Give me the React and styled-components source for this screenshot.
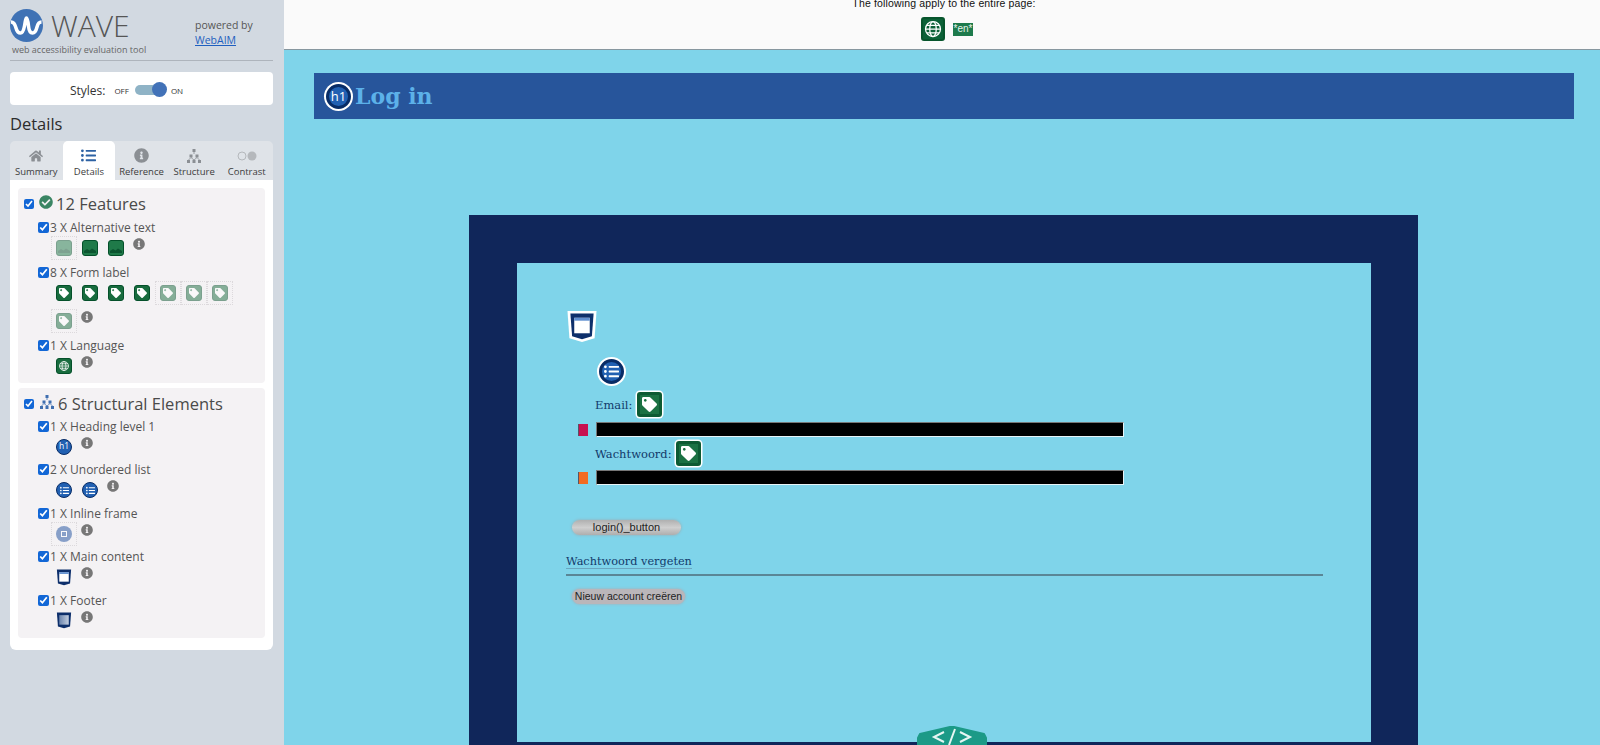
import React from 'react';
import styled, { createGlobalStyle, css } from 'styled-components';
import { FaHome, FaInfoCircle, FaListUl, FaTag, FaCheckCircle } from 'react-icons/fa';

const GlobalStyle = createGlobalStyle`
  html, body {
    margin: 0;
    height: 100%;
    overflow: hidden;
  }
  body {
    font-family: 'Open Sans', 'Liberation Sans', sans-serif;
    background: #7fd4ea;
  }
`;

const Page = styled.div`
  display: flex;
  width: 1600px;
  height: 745px;
  overflow: hidden;
`;

/* ---------- sidebar ---------- */

const Sidebar = styled.aside`
  flex: 0 0 284px;
  box-sizing: border-box;
  padding: 9px 11px 0 10px;
  background: #d2d9e1;
  color: #444;
`;

const Brand = styled.header`
  display: flex;
  height: 51px;
  border-bottom: 1px solid #aeb4bc;
`;

const BrandLeft = styled.div`
  width: 185px;
`;

const BrandTop = styled.div`
  display: flex;
  align-items: center;
  gap: 8px;
  height: 33px;
`;

const WaveWord = styled.span`
  font-size: 30px;
  font-weight: 300;
  line-height: 33px;
  color: #555;
`;

const Tagline = styled.div`
  margin: 1px 0 0 2px;
  font-size: 9px;
  line-height: 14px;
  color: #666;
`;

const Powered = styled.div`
  padding-top: 9px;
  font-size: 10.5px;
  line-height: 15px;
  color: #555;

  a {
    display: block;
    color: #1f5fbf;
  }
`;

const StylesPanel = styled.div`
  display: flex;
  align-items: center;
  justify-content: center;
  height: 33px;
  box-sizing: border-box;
  margin-top: 11px;
  padding: 3px 30px 0 0;
  background: #fff;
  border-radius: 4px;
  font-size: 12px;
  color: #333;
`;

const TinyLabel = styled.span`
  margin-left: ${({ $left }) => $left}px;
  font-size: 8px;
`;

const Track = styled.span`
  position: relative;
  width: 31px;
  height: 10px;
  margin-left: 6px;
  border-radius: 5px;
  background: #8fb3c6;

  &::after {
    content: '';
    position: absolute;
    top: -3px;
    right: -1px;
    width: 15px;
    height: 15px;
    border-radius: 50%;
    background: #4272b8;
  }
`;

const PanelTitle = styled.h2`
  margin: 8px 0 6px;
  font-size: 16.5px;
  font-weight: 400;
  line-height: 22px;
  color: #2c2c2c;
`;

const Tabs = styled.nav`
  display: grid;
  grid-template-columns: repeat(5, 1fr);
  height: 39px;
  background: #dfe3e8;
  border-radius: 5px 5px 0 0;
`;

const Tab = styled.div`
  display: flex;
  flex-direction: column;
  align-items: center;
  padding-top: 6px;
  box-sizing: border-box;
  font-size: 9.5px;
  line-height: 16px;
  white-space: nowrap;
  color: #3c3c3c;
  svg {
    display: block;
    color: ${({ $active }) => ($active ? '#2d62a3' : '#8b8f94')};
  }
  ${({ $active }) =>
    $active &&
    css`
      background: #fff;
      border-radius: 5px 5px 0 0;
    `}
`;

const TabIcon = styled.span`
  display: flex;
  height: 17px;
  align-items: center;
`;

const ResultsPanel = styled.div`
  display: flex;
  flex-direction: column;
  gap: 5px;
  padding: 8px 8px 12px;
  background: #fff;
  border-radius: 0 0 6px 6px;
`;

const Section = styled.section`
  display: flex;
  flex-direction: column;
  gap: ${({ $gap }) => $gap}px;
  padding: 0 0 6px 6px;
  height: ${({ $height }) => $height}px;
  box-sizing: border-box;
  background: #f4f2f4;
  border-radius: 4px;
`;

const Check = styled.input.attrs({ type: 'checkbox', defaultChecked: true })`
  width: ${({ $size }) => $size}px;
  height: ${({ $size }) => $size}px;
  margin: 0;
  flex: none;
  accent-color: #1267d6;
`;

const SectionHead = styled.div`
  display: flex;
  align-items: center;
  height: 23px;
  margin-top: 4px;
  font-size: 16.5px;
  color: #4a4a4a;
  svg {
    flex: none;
    margin: -4px 3px 0 5px;
  }
`;

const ItemLabel = styled.div`
  display: flex;
  align-items: center;
  gap: 1px;
  height: 17px;
  margin-left: 14px;
  font-size: 12px;
  color: #555;
`;

const IconRow = styled.div`
  display: flex;
  flex-wrap: wrap;
  row-gap: 4px;
  max-width: 200px;
  margin-left: 27px;
`;

const IconSlot = styled.span`
  display: flex;
  align-items: center;
  justify-content: center;
  width: 26px;
  height: 24px;
  box-sizing: border-box;
  ${({ $hidden }) =>
    $hidden &&
    css`
      outline: 1px dotted #dcd9dc;
      outline-offset: -1px;
      & > * {
        opacity: 0.5;
      }
    `}
`;

const Info = styled(FaInfoCircle)`
  margin: 2px 0 0 4px;
  width: 12px;
  height: 12px;
  color: #777;
`;

/* ---------- wave icons ---------- */

const GreenSquare = styled.span`
  display: inline-flex;
  flex: none;
  align-items: center;
  justify-content: center;
  box-sizing: border-box;
  width: 16px;
  height: 16px;
  border: 1.5px solid #04502a;
  border-radius: 3px;
  background: #186c3e;
  color: #fff;
  svg {
    width: 10px;
    height: 10px;
  }
  ${({ $large }) =>
    $large &&
    css`
      width: 25px;
      height: 25px;
      border: 3px solid #0d5a33;
      border-radius: 3px;
      box-shadow: 0 0 0 1.5px #fff;
      background: #1b7143;
      svg {
        width: 15px;
        height: 15px;
      }
    `}
`;

const Round = styled.span`
  display: inline-flex;
  flex: none;
  align-items: center;
  justify-content: center;
  box-sizing: border-box;
  width: 16px;
  height: 16px;
  border: 1.5px solid #082c66;
  border-radius: 50%;
  background: #2160b2;
  color: #fff;
  font-family: 'Open Sans', 'Liberation Sans', sans-serif;
  font-size: 8.5px;
  font-weight: 400;
  line-height: 1;
  svg {
    width: 9px;
    height: 9px;
  }
  ${({ $large }) =>
    $large &&
    css`
      width: 25px;
      height: 25px;
      border-width: 3px;
      box-shadow: 0 0 0 2px #fff;
      font-size: 13px;
      svg {
        width: 15px;
        height: 15px;
      }
    `}
`;

const TagIcon = ({ large }) => (
  <GreenSquare $large={large}>
    <FaTag />
  </GreenSquare>
);

const ImageIcon = () => (
  <svg width="16" height="16" viewBox="0 0 16 16">
    <rect x="0.5" y="0.5" width="15" height="15" rx="2.5" fill="#1f7a49" stroke="#04502a" />
    <path d="M2 13V11l3-2 2.500 1.500 2.500-2 4 2.500v2z" fill="#0b5530" />
  </svg>
);

const GlobeSvg = ({ size }) => (
  <svg width={size} height={size} viewBox="0 0 16 16" fill="none" stroke="#fff" strokeWidth="1">
    <circle cx="8" cy="8" r="6" />
    <ellipse cx="8" cy="8" rx="2.6" ry="6" />
    <path d="M2 8h12M3 5h10M3 11h10" />
  </svg>
);

const GlobeTile = styled(GreenSquare)`
  svg {
    width: ${({ $large }) => ($large ? 20 : 12)}px;
    height: ${({ $large }) => ($large ? 20 : 12)}px;
  }
  ${({ $large }) =>
    $large &&
    css`
      width: 24px;
      height: 24px;
      box-shadow: none;
      border: 2px solid #07552c;
      background: #0c6137;
    `}
`;

const Shield = ({ width, height, footer, ring }) => (
  <svg width={width} height={height} viewBox="0 0 30 32">
    {ring && <path d="M0 0h30l-2 28-13 4-13-4z" fill="#fff" />}
    <path d="M3 2.500h24l-1.800 23.500-10.200 3.200-10.200-3.200z" fill="#0d2f6b" />
    <rect x="7" y="7" width="16" height="16" fill={footer ? 'url(#foot)' : '#fff'} />
    {!footer && <rect x="7" y="7" width="16" height="3" fill="#5f8fd0" />}
    <defs>
      <linearGradient id="foot" x1="0" x2="1" y1="0" y2="0">
        <stop offset="0" stopColor="#6a84ad" />
        <stop offset="1" stopColor="#c4cfe0" />
      </linearGradient>
    </defs>
  </svg>
);

const StructureIcon = ({ size, color }) => (
  <svg width={size} height={size} viewBox="0 0 16 16" fill={color}>
    <rect x="6.500" y="1" width="3" height="3" />
    <rect x="3.500" y="6.500" width="3" height="3" />
    <rect x="9.500" y="6.500" width="3" height="3" />
    <rect x="1" y="12" width="3" height="3" />
    <rect x="6.500" y="12" width="3" height="3" />
    <rect x="12" y="12" width="3" height="3" />
    <path d="M8 4v2M5 9.500L2.500 12M11 9.500l2.500 2.500M5 9.500L8 12M11 9.500L8 12" stroke={color} strokeWidth="0.8" />
  </svg>
);

const ContrastIcon = () => (
  <svg width="20" height="10" viewBox="0 0 20 10">
    <circle cx="5" cy="5" r="4" fill="none" stroke="#b5b8bc" />
    <circle cx="15" cy="5" r="4.500" fill="#b5b8bc" />
  </svg>
);

const LogoMark = () => (
  <svg width="33" height="33" viewBox="0 0 33 33">
    <circle cx="16.500" cy="16.500" r="16.500" fill="#3f72b5" />
    <path
      d="M1 13c3 0 4 2 5 6s2.500 5 4.500 5 3-2 4-7 1-8 2-8 1.500 3 2 8 2 7 4 7 3.500-2 4.500-6 2-5 4.500-5"
      fill="none"
      stroke="#fff"
      strokeWidth="3.500"
    />
  </svg>
);

const FrameDot = styled.span`
  display: flex;
  align-items: center;
  justify-content: center;
  width: 16px;
  height: 16px;
  border-radius: 50%;
  background: #1d4f9e;
  &::after {
    content: '';
    width: 4px;
    height: 4px;
    border: 1px solid #fff;
  }
`;

/* ---------- page under test ---------- */

const Content = styled.main`
  flex: 1;
  min-width: 0;
  background: #7fd4ea;
`;

const SummaryBar = styled.div`
  display: flow-root;
  height: 50px;
  box-sizing: border-box;
  padding-left: 4px;
  background: #fafafa;
  border-bottom: 1px solid #87979f;
  text-align: center;
  font-family: 'Liberation Sans', Arial, sans-serif;
  font-size: 10.5px;
  color: #111;
`;

const SummaryText = styled.div`
  margin-top: -3px;
  line-height: 13px;
  letter-spacing: 0.15px;
`;

const SummaryIcons = styled.div`
  display: flex;
  justify-content: center;
  align-items: center;
  gap: 8px;
  margin-top: 7px;
  padding-left: 6px;
`;

const LangTag = styled.span`
  display: block;
  width: 20px;
  height: 13px;
  background: #1d7a4c;
  color: #e6f3ea;
  font-size: 10px;
  line-height: 12px;
`;

const ContentInner = styled.div`
  padding: 23px 26px 0 30px;
`;

const TitleBar = styled.h1`
  display: flex;
  align-items: center;
  gap: 4px;
  height: 46px;
  margin: 0;
  padding-left: 12px;
  background: #27559b;
  font-family: 'DejaVu Serif', 'Liberation Serif', serif;
  font-size: 22px;
  font-weight: 700;
  color: #5cb1e9;
`;

const NavyFrame = styled.div`
  position: relative;
  margin: 96px 156px 0 155px;
  padding: 48px 47px 48px 48px;
  background: #10265a;
`;

const InnerBox = styled.div`
  height: 479px;
  box-sizing: border-box;
  padding: 48px 49px;
  background: #7fd4ea;
`;

const MainMark = styled.div`
  margin-left: 1px;
  height: 31px;
`;

const ListMark = styled.div`
  margin: 17px 0 0 33px;
  height: 27px;
`;

const LoginForm = styled.form`
  margin-top: 5px;
  padding-left: 12px;
`;

const FieldLabel = styled.div`
  display: flex;
  align-items: center;
  gap: 4.5px;
  height: 27px;
  margin-left: 17px;
  font-family: 'DejaVu Serif', 'Liberation Serif', serif;
  font-size: 11.5px;
  color: #123a6b;
`;

const FieldRow = styled.div`
  display: flex;
  align-items: center;
  gap: 8px;
  margin: ${({ $top }) => $top}px 0 3px;
`;

const Marker = styled.span`
  width: 10px;
  height: 12px;
  background: ${({ $color }) => $color};
  border-left: 1px solid #556;
  box-sizing: border-box;
`;

const BlackInput = styled.div`
  width: 528px;
  height: 15px;
  box-sizing: border-box;
  background: #000;
  border: 1px solid #e8f4f8;
  border-top-color: #777;
  border-left-color: #777;
`;

const PillButton = styled.div`
  width: ${({ $width }) => $width}px;
  height: 15px;
  margin: ${({ $top }) => $top}px 0 0 6px;
  border-radius: 8px;
  background: ${({ $plain }) =>
    $plain ? '#bab6ba' : 'linear-gradient(#b0b0b0, #cfcfcf 50%, #aeaeae)'};
  box-shadow: 0 0 3px ${({ $plain }) => ($plain ? '#b2a6ac' : '#a0a8ac')};
  text-align: center;
  font-family: 'Liberation Sans', Arial, sans-serif;
  font-size: ${({ $plain }) => ($plain ? 10.5 : 11)}px;
  line-height: 15px;
  color: #222;
`;

const ForgotLink = styled.div`
  margin-top: 20px;
  font-family: 'DejaVu Serif', 'Liberation Serif', serif;
  font-size: 11.3px;
  line-height: 14px;
  color: #123a6b;

  span {
    border-bottom: 1px solid #6aa6c0;
  }
`;

const Rule = styled.hr`
  width: 757px;
  height: 2px;
  margin: 5px 0 0;
  border: 0;
  background: #5a8696;
`;

const CodeBadge = styled.svg`
  position: absolute;
  left: 447px;
  top: 510px;
`;

const results = {
  features: [
    { id: 'alt', label: '3 X Alternative text', icons: [['img', 1], ['img'], ['img']] },
    {
      id: 'form',
      label: '8 X Form label',
      icons: [['tag'], ['tag'], ['tag'], ['tag'], ['tag', 1], ['tag', 1], ['tag', 1], ['tag', 1]],
    },
    { id: 'lang', label: '1 X Language', icons: [['globe']] },
  ],
  structure: [
    { id: 'h1', label: '1 X Heading level 1', icons: [['h1']] },
    { id: 'ul', label: '2 X Unordered list', icons: [['list'], ['list']] },
    { id: 'frame', label: '1 X Inline frame', icons: [['frame', 1]] },
    { id: 'main', label: '1 X Main content', icons: [['main']] },
    { id: 'footer', label: '1 X Footer', icons: [['footer']] },
  ],
};

const renderIcon = (kind) => {
  switch (kind) {
    case 'img':
      return <ImageIcon />;
    case 'tag':
      return <TagIcon />;
    case 'globe':
      return (
        <GlobeTile>
          <GlobeSvg size={12} />
        </GlobeTile>
      );
    case 'h1':
      return <Round>h1</Round>;
    case 'list':
      return (
        <Round>
          <FaListUl />
        </Round>
      );
    case 'frame':
      return <FrameDot />;
    case 'main':
      return <Shield width={18} height={19} />;
    case 'footer':
      return <Shield width={18} height={19} footer />;
    default:
      return null;
  }
};

const ResultItem = ({ label, icons }) => (
  <div>
    <ItemLabel>
      <Check $size={11} />
      {label}
    </ItemLabel>
    <IconRow>
      {icons.map(([kind, hidden], i) => (
        <IconSlot key={i} $hidden={hidden}>
          {renderIcon(kind)}
        </IconSlot>
      ))}
      <Info />
    </IconRow>
  </div>
);

const App = () => (
  <Page>
    <GlobalStyle />
    <Sidebar>
      <Brand>
        <BrandLeft>
          <BrandTop>
            <LogoMark />
            <WaveWord>WAVE</WaveWord>
          </BrandTop>
          <Tagline>web accessibility evaluation tool</Tagline>
        </BrandLeft>
        <Powered>
          powered by
          <a href="#webaim">WebAIM</a>
        </Powered>
      </Brand>

      <StylesPanel>
        Styles:
        <TinyLabel $left={9}>OFF</TinyLabel>
        <Track />
        <TinyLabel $left={5}>ON</TinyLabel>
      </StylesPanel>

      <PanelTitle>Details</PanelTitle>

      <Tabs>
        <Tab>
          <TabIcon>
            <FaHome size={14} />
          </TabIcon>
          Summary
        </Tab>
        <Tab $active>
          <TabIcon>
            <FaListUl size={15} />
          </TabIcon>
          Details
        </Tab>
        <Tab>
          <TabIcon>
            <FaInfoCircle size={15} />
          </TabIcon>
          Reference
        </Tab>
        <Tab>
          <TabIcon>
            <StructureIcon size={16} color="#8b8f94" />
          </TabIcon>
          Structure
        </Tab>
        <Tab>
          <TabIcon>
            <ContrastIcon />
          </TabIcon>
          Contrast
        </Tab>
      </Tabs>

      <ResultsPanel>
        <Section $gap={4} $height={195}>
          <SectionHead>
            <Check $size={10} />
            <FaCheckCircle size={14} color="#3a8563" />
            12 Features
          </SectionHead>
          {results.features.map((item) => (
            <ResultItem key={item.id} label={item.label} icons={item.icons} />
          ))}
        </Section>
        <Section $gap={2.5} $height={250}>
          <SectionHead>
            <Check $size={10} />
            <StructureIcon size={16} color="#3f6fb0" />
            6 Structural Elements
          </SectionHead>
          {results.structure.map((item) => (
            <ResultItem key={item.id} label={item.label} icons={item.icons} />
          ))}
        </Section>
      </ResultsPanel>
    </Sidebar>

    <Content>
      <SummaryBar>
        <SummaryText>The following apply to the entire page:</SummaryText>
        <SummaryIcons>
          <GlobeTile $large>
            <GlobeSvg size={20} />
          </GlobeTile>
          <LangTag>*en*</LangTag>
        </SummaryIcons>
      </SummaryBar>

      <ContentInner>
        <TitleBar>
          <Round $large>h1</Round>
          Log in
        </TitleBar>

        <NavyFrame>
          <InnerBox>
            <MainMark>
              <Shield width={30} height={31} ring />
            </MainMark>
            <ListMark>
              <Round $large>
                <FaListUl />
              </Round>
            </ListMark>

            <LoginForm>
              <FieldLabel>
                Email:
                <TagIcon large />
              </FieldLabel>
              <FieldRow $top={4}>
                <Marker $color="#c8104f" />
                <BlackInput />
              </FieldRow>
              <FieldLabel>
                Wachtwoord:
                <TagIcon large />
              </FieldLabel>
              <FieldRow $top={3}>
                <Marker $color="#f26a21" />
                <BlackInput />
              </FieldRow>
            </LoginForm>

            <PillButton $width={109} $top={35}>
              login()_button
            </PillButton>
            <ForgotLink>
              <span>Wachtwoord vergeten</span>
            </ForgotLink>
            <Rule />
            <PillButton $width={113} $top={13} $plain>
              Nieuw account creëren
            </PillButton>
          </InnerBox>

          <CodeBadge width="72" height="24" viewBox="0 0 72 24">
            <path
              d="M4 9L34 2h4l30 7 2 4v11H2V13z"
              fill="#1c9a87"
              stroke="#1c9a87"
              strokeWidth="2"
              strokeLinejoin="round"
            />
            <path
              d="M28 7l-10 5 10 5M44 7l10 5-10 5M39 4l-6 16"
              fill="none"
              stroke="#e8f6f3"
              strokeWidth="2"
            />
          </CodeBadge>
        </NavyFrame>
      </ContentInner>
    </Content>
  </Page>
);

export default App;
